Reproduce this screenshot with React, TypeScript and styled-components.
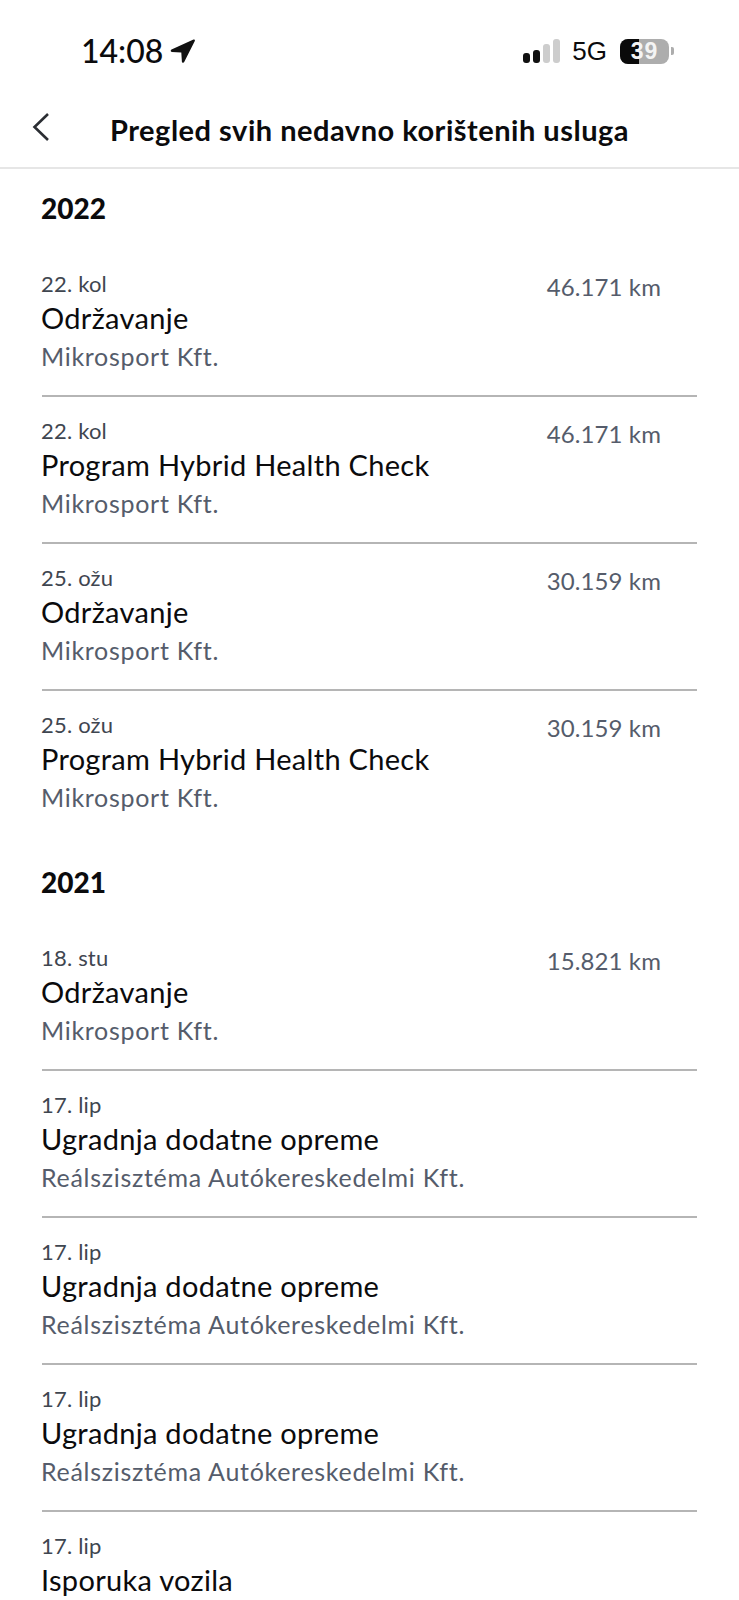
import styled, { createGlobalStyle } from 'styled-components';

interface Service {
  date: string;
  title: string;
  shop?: string;
  km?: string;
}

const MIKRO = 'Mikrosport Kft.';
const REAL = 'Reálszisztéma Autókereskedelmi Kft.';

const groups: { year: string; items: Service[] }[] = [
  {
    year: '2022',
    items: [
      { date: '22. kol', title: 'Održavanje', shop: MIKRO, km: '46.171 km' },
      { date: '22. kol', title: 'Program Hybrid Health Check', shop: MIKRO, km: '46.171 km' },
      { date: '25. ožu', title: 'Održavanje', shop: MIKRO, km: '30.159 km' },
      { date: '25. ožu', title: 'Program Hybrid Health Check', shop: MIKRO, km: '30.159 km' },
    ],
  },
  {
    year: '2021',
    items: [
      { date: '18. stu', title: 'Održavanje', shop: MIKRO, km: '15.821 km' },
      { date: '17. lip', title: 'Ugradnja dodatne opreme', shop: REAL },
      { date: '17. lip', title: 'Ugradnja dodatne opreme', shop: REAL },
      { date: '17. lip', title: 'Ugradnja dodatne opreme', shop: REAL },
      { date: '17. lip', title: 'Isporuka vozila' },
    ],
  },
];

const App = () => {
  return (
    <Page>
      <GlobalStyle />
      <StatusBar>
        <Clock>
          14:08
          <svg width="25" height="24" viewBox="0 0 25 24">
            <path d="M23.500 .6 1.500 10.600c-1.200.6-.9 2.200.4 2.300l9.400.5.6 9.300c.1 1.300 1.800 1.600 2.300.4L24.800 2c.4-.9-.4-1.800-1.300-1.400z" fill="#111" />
          </svg>
        </Clock>
        <StatusIcons>
          <Signal>
            <SignalBar $h={10} $on />
            <SignalBar $h={13} $on />
            <SignalBar $h={19} />
            <SignalBar $h={24} />
          </Signal>
          <Network>5G</Network>
          <Battery>
            <BatteryFill />
            <BatteryLevel>39</BatteryLevel>
          </Battery>
          <BatteryCap />
        </StatusIcons>
      </StatusBar>
      <Header>
        <BackButton>
          <svg width="18" height="30" viewBox="0 0 18 30" fill="none">
            <path d="M16 2 2.500 15 16 28" stroke="#2b2e33" strokeWidth="2.600" />
          </svg>
        </BackButton>
        <Title>Pregled svih nedavno korištenih usluga</Title>
      </Header>
      {groups.map((group) => (
        <Group key={group.year}>
          <Year>{group.year}</Year>
          {group.items.map((item, idx) => (
            <Row key={idx}>
              <RowText>
                <DateLabel>{item.date}</DateLabel>
                <ServiceName>{item.title}</ServiceName>
                {item.shop && <Shop>{item.shop}</Shop>}
              </RowText>
              {item.km && <Km>{item.km}</Km>}
            </Row>
          ))}
        </Group>
      ))}
    </Page>
  );
};

export default App;

const GlobalStyle = createGlobalStyle`
  html, body {
    margin: 0;
    background: #fff;
  }
`;
const Page = styled.div`
  width: 739px;
  height: 1600px;
  overflow: hidden;
  background: #fff;
  font-family: 'Lato', 'Liberation Sans', sans-serif;
  color: #0b0b0d;
`;
const StatusBar = styled.div`
  height: 100px;
  box-sizing: border-box;
  padding: 32px 65px 0 81px;
  display: flex;
  justify-content: space-between;
  align-items: flex-start;
`;
const Clock = styled.div`
  display: flex;
  align-items: center;
  gap: 7px;
  font-size: 32px;
  line-height: 38px;
  font-weight: 500;
`;
const StatusIcons = styled.div`
  display: flex;
  align-items: center;
  height: 38px;
`;
const Signal = styled.div`
  display: flex;
  align-items: flex-end;
  gap: 3px;
  height: 24px;
  margin-right: 12px;
`;
const SignalBar = styled.div<{ $h: number; $on?: boolean }>`
  width: 7px;
  height: ${(p) => p.$h}px;
  border-radius: 3px;
  background: ${(p) => (p.$on ? '#111' : '#cdcdcd')};
`;
const Network = styled.div`
  font-family: 'Liberation Sans', sans-serif;
  font-size: 26px;
  margin-right: 13px;
`;
const Battery = styled.div`
  position: relative;
  width: 49px;
  height: 25px;
  border-radius: 8px;
  overflow: hidden;
  background: #adadad;
`;
const BatteryFill = styled.div`
  position: absolute;
  inset: 0 30px 0 0;
  background: #0a0a0a;
`;
const BatteryLevel = styled.div`
  position: absolute;
  inset: 0;
  text-align: center;
  font-family: 'Liberation Sans', sans-serif;
  font-weight: 700;
  font-size: 23px;
  line-height: 25px;
  letter-spacing: 1px;
  color: #f4f4f4;
`;
const BatteryCap = styled.div`
  width: 3px;
  height: 8px;
  margin-left: 2px;
  border-radius: 0 2px 2px 0;
  background: #adadad;
`;
const Header = styled.div`
  position: relative;
  height: 69px;
  box-sizing: border-box;
  padding-bottom: 7px;
  display: flex;
  align-items: center;
  justify-content: center;
  border-bottom: 2px solid #e6e6e6;
`;
const BackButton = styled.div`
  position: absolute;
  left: 32px;
  top: 12px;
  height: 30px;
`;
const Title = styled.div`
  font-size: 29px;
  font-weight: 700;
  line-height: 36px;
  letter-spacing: 0.5px;
`;
const Group = styled.div`
  padding: 0 42px 0 42px;
  &:last-child {
    margin-top: 5px;
  }
`;
const Year = styled.div`
  padding-top: 21px;
  font-size: 28px;
  font-weight: 900;
  line-height: 36px;
  margin: 0 0 24px -1px;
`;
const Row = styled.div`
  height: 147px;
  box-sizing: border-box;
  padding-top: 20px;
  display: flex;
  justify-content: space-between;
  border-bottom: 2px solid #b5b5b5;
  &:last-child {
    border-bottom: none;
  }
`;
const RowText = styled.div`
  display: flex;
  flex-direction: column;
  margin-left: -1px;
`;
const DateLabel = styled.div`
  font-size: 22px;
  line-height: 28px;
  letter-spacing: 0.2px;
  color: #3f4650;
`;
const ServiceName = styled.div`
  margin-top: 2px;
  font-size: 29px;
  line-height: 36px;
  letter-spacing: 0.3px;
  color: #0b0b0d;
`;
const Shop = styled.div`
  margin-top: 3px;
  font-size: 25px;
  line-height: 34px;
  letter-spacing: 0.7px;
  color: #555c6b;
`;
const Km = styled.div`
  margin: 1px 36px 0 0;
  font-size: 24px;
  line-height: 32px;
  letter-spacing: 0.1px;
  color: #555c6b;
`;
